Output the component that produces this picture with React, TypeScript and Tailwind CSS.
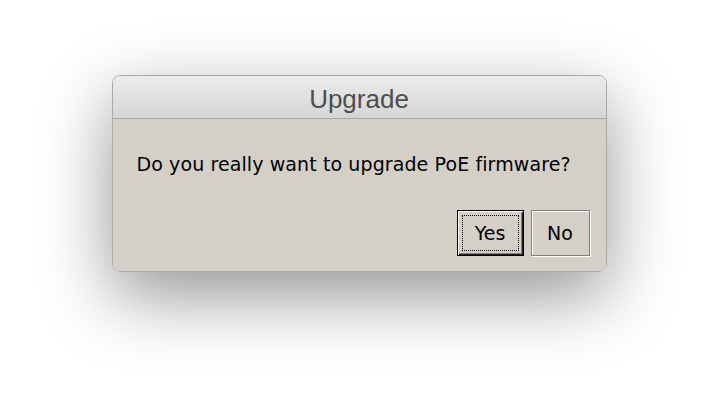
const App = () => {
  return (
    <div className="w-[718px] h-[420px] bg-white flex justify-center pt-[75px]">
      <div className="w-[495px] h-[197px] rounded-[8px] border border-[#a8a8a8] overflow-hidden flex flex-col shadow-[0_24px_70px_rgba(0,0,0,0.42)]">
        <div className="h-[43px] shrink-0 bg-gradient-to-b from-[#ececec] to-[#d5d5d5] border-b border-[#a9a9a9] flex items-center justify-center">
          <span className="text-[26px] leading-none text-[#4e4e4e] font-['Liberation_Sans',Arial,sans-serif] pt-[3px]">
            Upgrade
          </span>
        </div>
        <div className="flex-1 bg-[#d4d0c8] flex flex-col pl-[24px] pr-[16px] pt-[33px] pb-[15px] font-['DejaVu_Sans',Tahoma,sans-serif] text-black">
          <p className="text-[19px] leading-[25px] tracking-[0.1px]">Do you really want to upgrade PoE firmware?</p>
          <div className="mt-auto flex justify-end gap-[7px]">
            <button className="relative w-[67px] h-[46px] bg-[#d4d0c8] border border-black shadow-[inset_1px_1px_0_#ffffff,inset_-1px_-1px_0_#202020,inset_-2px_-2px_0_#808080] text-[19px]">
              <span className="absolute inset-[4px] border border-dotted border-black" />
              Yes
            </button>
            <button className="w-[59px] h-[46px] bg-[#d4d0c8] border border-[#808080] shadow-[inset_1px_1px_0_#ffffff,1px_1px_0_#ffffff] text-[19px]">
              No
            </button>
          </div>
        </div>
      </div>
    </div>
  );
};

export default App;
